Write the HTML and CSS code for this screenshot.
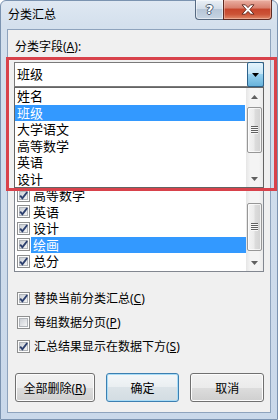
FILE: index.html
```html
<!DOCTYPE html>
<html lang="zh-CN">
<head>
    <meta charset="UTF-8">
    <title>分类汇总</title>
    <link rel="stylesheet" href="styles.css">
</head>
<body>
    <svg class="defs" width="0" height="0">
        <defs>
            <linearGradient id="cbFill" x1="0" y1="0" x2="1" y2="1">
                <stop offset="0" stop-color="#c9cdd3"/>
                <stop offset="1" stop-color="#f7f7f7"/>
            </linearGradient>
            <symbol id="cbOff" viewBox="0 0 13 13">
                <rect x="0.5" y="0.5" width="12" height="12" fill="#fdfdfd" stroke="#8e8f8f"/>
                <rect x="2.5" y="2.5" width="8" height="8" fill="url(#cbFill)" stroke="#b1b5ba"/>
            </symbol>
            <symbol id="cbOn" viewBox="0 0 13 13">
                <rect x="0.5" y="0.5" width="12" height="12" fill="#fdfdfd" stroke="#8e8f8f"/>
                <rect x="2.5" y="2.5" width="8" height="8" fill="url(#cbFill)" stroke="#b1b5ba"/>
                <path d="M3.2 6.6 L5.4 9.3 L10.2 3" fill="none" stroke="#2c3f6e" stroke-width="1.9"/>
            </symbol>
        </defs>
    </svg>

    <div class="window">
        <div class="titlebar">
            <span class="title">分类汇总</span>
            <div class="caption">
                <div class="cap-btn help">?</div>
                <div class="cap-btn close">
                    <svg width="14" height="11" viewBox="0 0 14 11">
                        <path d="M1 .8h3.4L7 3.6 9.6.8H13L8.9 5.5 13 10.2H9.6L7 7.4 4.4 10.2H1l4.1-4.7z" fill="#fff" stroke="#5a2118" stroke-width=".9" stroke-linejoin="round"/>
                    </svg>
                </div>
            </div>
        </div>

        <div class="client">
            <div class="label">分类字段(<u>A</u>):</div>

            <div class="field">
                <div class="combo">
                    <span class="combo-text">班级</span>
                    <div class="combo-btn">
                        <svg width="7" height="4" viewBox="0 0 7 4"><path d="M0 0h7L3.5 4z" fill="#000"/></svg>
                    </div>
                </div>
                <div class="droplist">
                    <ul class="items">
                        <li>姓名</li>
                        <li class="sel">班级</li>
                        <li>大学语文</li>
                        <li>高等数学</li>
                        <li>英语</li>
                        <li>设计</li>
                    </ul>
                    <div class="scrollbar">
                        <div class="arrow"><svg width="7" height="4" viewBox="0 0 7 4"><path d="M0 4h7L3.5 0z" fill="#606060"/></svg></div>
                        <div class="thumb drop-thumb"><span class="grip"></span></div>
                        <div class="track"></div>
                        <div class="arrow"><svg width="7" height="4" viewBox="0 0 7 4"><path d="M0 0h7L3.5 4z" fill="#606060"/></svg></div>
                    </div>
                </div>
                <div class="mark"></div>
            </div>

            <div class="listbox">
                <ul class="checklist">
                    <li><svg class="cb"><use href="#cbOn"/></svg><span>高等数学</span></li>
                    <li><svg class="cb"><use href="#cbOn"/></svg><span>英语</span></li>
                    <li><svg class="cb"><use href="#cbOn"/></svg><span>设计</span></li>
                    <li class="sel"><svg class="cb"><use href="#cbOn"/></svg><span>绘画</span></li>
                    <li><svg class="cb"><use href="#cbOn"/></svg><span>总分</span></li>
                </ul>
                <div class="scrollbar">
                    <div class="track"></div>
                    <div class="thumb list-thumb"><span class="grip"></span></div>
                    <div class="arrow"><svg width="7" height="4" viewBox="0 0 7 4"><path d="M0 0h7L3.5 4z" fill="#606060"/></svg></div>
                </div>
            </div>

            <div class="options">
                <label class="option"><svg class="cb"><use href="#cbOn"/></svg><span>替换当前分类汇总(<u>C</u>)</span></label>
                <label class="option"><svg class="cb"><use href="#cbOff"/></svg><span>每组数据分页(<u>P</u>)</span></label>
                <label class="option"><svg class="cb"><use href="#cbOn"/></svg><span>汇总结果显示在数据下方(<u>S</u>)</span></label>
            </div>

            <div class="buttons">
                <button class="btn wide">全部删除(<u>R</u>)</button>
                <button class="btn default">确定</button>
                <button class="btn">取消</button>
            </div>
        </div>
    </div>
</body>
</html>
```

FILE: styles.css
```css
* {
    box-sizing: border-box;
}

body {
    margin: 0;
    font-family: "Noto Sans", "Noto Sans CJK SC", sans-serif;
    font-size: 12px;
    color: #000;
    background: #fff;
}

.defs {
    display: block;
    width: 0;
    height: 0;
}

u {
    text-decoration: underline;
    text-underline-offset: 1px;
}

/* 窗口外框 */
.window {
    width: 278px;
    height: 420px;
    display: flex;
    flex-direction: column;
    padding: 0 6px 6px;
    border: 1px solid #7b93b0;
    border-radius: 6px 6px 0 0;
    background: linear-gradient(180deg, #dfe8f2 0%, #d4e0ed 24px, #c9d8ea 100%);
}

.titlebar {
    height: 28px;
    display: flex;
    justify-content: space-between;
    align-items: flex-start;
}

.title {
    padding: 6px 0 0 1px;
    line-height: 16px;
    font-size: 12px;
}

.caption {
    display: flex;
    margin: -1px -1px 0 0;
}

.cap-btn {
    height: 20px;
    display: flex;
    align-items: center;
    justify-content: center;
    border: 1px solid #566a82;
    border-top: none;
}

.help {
    width: 28px;
    border-right: none;
    border-radius: 0 0 0 4px;
    background: linear-gradient(180deg, #eaf0f6 0%, #d3dde8 45%, #b7c6d7 50%, #c6d4e3 100%);
    box-shadow: inset 0 0 0 1px rgba(255, 255, 255, 0.5);
    color: #fff;
    font-family: "DejaVu Sans", sans-serif;
    font-size: 13px;
    font-weight: bold;
    line-height: 1;
    text-shadow: 1px 0 #4a5a70, -1px 0 #4a5a70, 0 1px #4a5a70, 0 -1px #4a5a70;
}

.close {
    width: 49px;
    border-color: #5e2a22;
    border-radius: 0 0 4px 0;
    background: linear-gradient(180deg, #eab0a3 0%, #d98270 40%, #c7462c 50%, #cc5337 75%, #e08a6a 100%);
    box-shadow: inset 0 0 0 1px rgba(255, 220, 210, 0.4);
}

/* 客户区 */
.client {
    flex: 1;
    padding: 9px 6px 0;
    border: 1px solid #8ea3bd;
    background: #f0f0f0;
}

.label {
    padding-left: 1px;
    line-height: 16px;
}

.field {
    position: relative;
    z-index: 2;
    margin-top: 7px;
}

.combo {
    height: 25px;
    display: flex;
    border: 1px solid #7a7a7a;
    background: #fff;
}

.combo-text {
    flex: 1;
    padding-left: 2px;
    line-height: 23px;
    font-size: 13px;
}

.combo-btn {
    width: 17px;
    margin: -1px -1px -1px 0;
    display: flex;
    align-items: center;
    justify-content: center;
    border: 1px solid #2c628b;
    border-radius: 2px;
    background: linear-gradient(180deg, #e5f4fc 0%, #c4e5f6 50%, #98d1ef 50%, #68b3db 100%);
}

.droplist {
    height: 101px;
    display: flex;
    border: 1px solid #646464;
    background: #fff;
}

.items,
.checklist {
    flex: 1;
    margin: 0;
    padding: 0;
    list-style: none;
    font-size: 13px;
}

.items li {
    height: 16.5px;
    padding-left: 2px;
    line-height: 16.5px;
}

.items li.sel {
    margin-right: 1px;
    background: #3399ff;
    color: #fff;
}

/* 红色标注框 */
.mark {
    position: absolute;
    top: -5px;
    left: -8px;
    right: -13px;
    bottom: -3px;
    border: 3px solid #d8424b;
    pointer-events: none;
}

/* 滚动条 */
.scrollbar {
    width: 17px;
    display: flex;
    flex-direction: column;
    background: linear-gradient(90deg, #e6e6e6 0%, #f4f4f4 25%, #f4f4f4 75%, #ebebeb 100%);
}

.arrow {
    height: 17px;
    display: flex;
    align-items: center;
    justify-content: center;
}

.track {
    flex: 1;
}

.thumb {
    margin: 0 1px;
    display: flex;
    align-items: center;
    justify-content: center;
    border: 1px solid #979797;
    border-radius: 2px;
    background: linear-gradient(90deg, #f4f4f4 0%, #ececec 45%, #dcdcdc 55%, #d2d2d2 100%);
    box-shadow: inset 0 0 0 1px rgba(255, 255, 255, 0.7);
}

.drop-thumb {
    height: 46px;
    margin-top: 2px;
}

.list-thumb {
    height: 48px;
    margin-bottom: 3px;
}

.grip {
    width: 7px;
    height: 8px;
    background: repeating-linear-gradient(180deg, #606060 0, #606060 1px, #f8f8f8 1px, #f8f8f8 2px);
}

/* 汇总项列表 */
.listbox {
    height: 84px;
    display: flex;
    overflow: hidden;
    border: 1px solid #828790;
    background: #fff;
}

.checklist {
    margin-top: -2px;
}

.checklist li {
    height: 16.5px;
    display: flex;
    align-items: center;
    padding-left: 2px;
}

.checklist span {
    flex: 1;
    height: 100%;
    margin-left: 1px;
    padding-left: 2px;
    line-height: 16.5px;
}

.checklist li.sel span {
    background: #3399ff;
    color: #fff;
}

.cb {
    width: 13px;
    height: 13px;
    flex: none;
}

/* 复选项 */
.options {
    margin-top: 18px;
    display: flex;
    flex-direction: column;
    gap: 7px;
}

.option {
    height: 17px;
    display: flex;
    align-items: center;
    gap: 4px;
    padding-left: 3px;
    line-height: 17px;
}

/* 底部按钮 */
.buttons {
    margin-top: 18px;
    display: flex;
    gap: 11px;
    padding-left: 1px;
}

.btn {
    width: 74px;
    height: 29px;
    padding: 0;
    font-family: inherit;
    font-size: 12px;
    color: #000;
    border: 1px solid #707070;
    border-radius: 3px;
    background: linear-gradient(180deg, #f2f2f2 0%, #ebebeb 50%, #dddddd 50%, #cfcfcf 100%);
    box-shadow: inset 0 0 0 1px #fcfcfc;
}

.btn.wide {
    width: 80px;
}

.btn.default {
    border-color: #3c7fb1;
    background: linear-gradient(180deg, #f4f7f9 0%, #e9eef1 50%, #dbe3e8 50%, #d3dce2 100%);
    box-shadow: inset 0 0 0 1px #a9dcf6;
}
```
